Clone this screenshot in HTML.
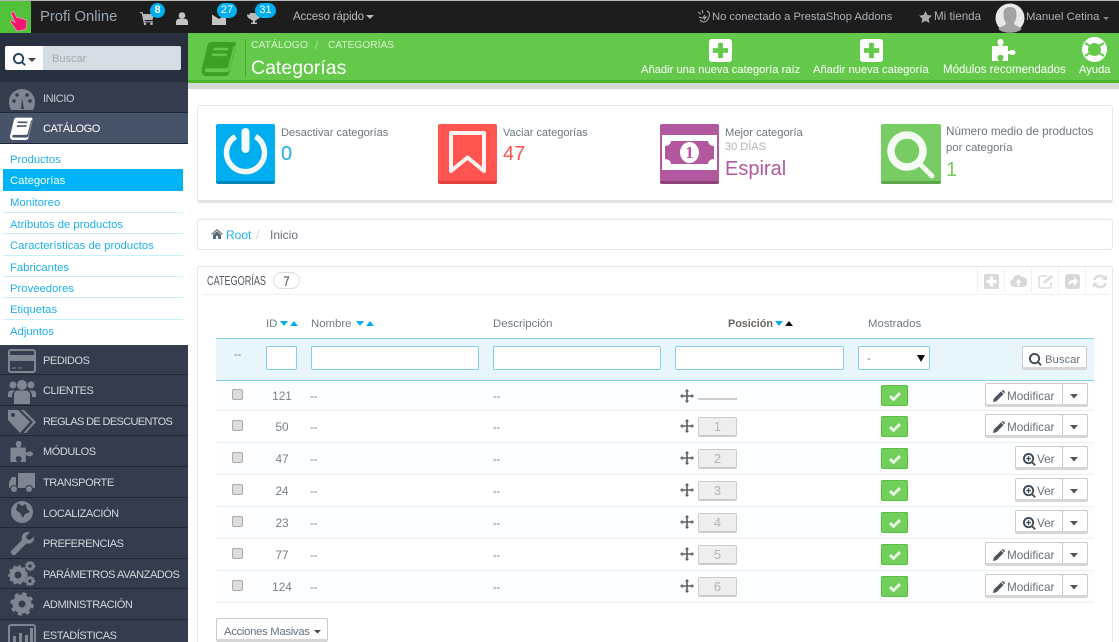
<!DOCTYPE html>
<html lang="es"><head><meta charset="utf-8"><title>Categorías</title>
<style>
html,body{margin:0;padding:0;width:1119px;height:642px;overflow:hidden;background:#fff;font-family:"Liberation Sans",sans-serif;font-size:12.5px;color:#6c7680}
#w{position:relative;width:1119px;height:642px;overflow:hidden}
.b,.t,svg{position:absolute}
.b{box-sizing:border-box}
.t{white-space:nowrap;line-height:16px}
.m{color:#fff;font-size:11px;letter-spacing:-.42px;margin-top:1px}
.sub{color:#1eaeec;font-size:11.3px;left:10px;margin-top:1px}
.sep{left:3px;width:180px;height:1px;background:#c9effc}
.si{background:#333d4e;left:0;width:188px;border-bottom:1px solid #1f2735}
.lab{color:#fff;font-size:11.2px;margin-top:1px}
.inp{background:#fff;border:1px solid #84cdea;border-radius:2px;height:24px;top:346px}
.hdr{color:#6f7a84;font-size:11.4px;top:316px}
.row{left:216px;width:878px;border-bottom:1px solid #e8eff2}
.cb{left:232px;width:11px;height:11px;background:#dcdcdc;border:1px solid #aaa;border-radius:2px}
.id{width:40px;left:262px;text-align:center;color:#78818a;font-size:11.8px}
.dd{color:#6f7a84;font-size:11px}
.pos{left:698px;width:39px;height:20px;background:#eee;border:1px solid #ccc;border-bottom-width:2px;border-radius:2px;color:#b4b4b4;text-align:center;line-height:18px;font-size:13px}
.ck{left:881px;width:27px;height:21px;background:#72cf5b;border:1px solid #57c13e;border-radius:2px}
.btn{background:#fff;border:1px solid #ccc;border-bottom:3px solid #d6d6d6;border-radius:2px;height:24px}
.bt{color:#66727c;font-size:11.7px;margin-top:1px}
.tb{width:1px;height:28px;top:267px;background:#f0f0f0}
.bdg{border-radius:8px;background:#00aff0}
.nar{transform-origin:left center;font-size:13px;color:#505a63}
</style></head><body><div id="w">
<svg width="0" height="0" style="position:absolute"><defs>
<symbol id="plus" viewBox="0 0 24 24"><path d="M3 0h18a3 3 0 0 1 3 3v18a3 3 0 0 1-3 3H3a3 3 0 0 1-3-3V3a3 3 0 0 1 3-3zM9.500 4v5.500H4v5h5.500V20h5v-5.500H20v-5h-5.500V4z" fill-rule="evenodd"/></symbol>
<symbol id="puz" viewBox="0 0 24 24"><path d="M0 8h6.500C7 7 5.500 6 5.500 4 5.500 2 7 1 8.500 1S11.500 2 11.500 4c0 2-1.500 3-1 4H16v5c1 .6 2-1 4-1 2 0 3.500 1 3.500 2.500S22 17 20 17c-2 0-3-1.500-4-1v7h-5.500c-.5-1 1-2 1-3.500S10.500 17 8.500 17s-3 1-3 2.500 1.500 2.500 1 3.500H0z"/></symbol>
<symbol id="mag" viewBox="0 0 14 14"><path d="M6 0a6 6 0 0 1 4.800 9.500l3 3-1.400 1.400-3-3A6 6 0 1 1 6 0zm0 2a4 4 0 1 0 0 8 4 4 0 0 0 0-8z" fill-rule="evenodd"/></symbol>
<symbol id="magp" viewBox="0 0 14 14"><path d="M6 0a6 6 0 0 1 4.800 9.500l3 3-1.400 1.400-3-3A6 6 0 1 1 6 0zm0 2a4 4 0 1 0 0 8 4 4 0 0 0 0-8zM5.300 3.500h1.400v1.800h1.800v1.400H6.700v1.800H5.300V6.700H3.500V5.300h1.800z" fill-rule="evenodd"/></symbol>
<symbol id="pen" viewBox="0 0 12 12"><path d="M0 12l.8-3.400L8 1.400 10.600 4l-7.200 7.200zM8.800.6c.6-.6 1.400-.6 2 0l.6.600c.6.6.6 1.400 0 2l-.2.200-2.600-2.600z"/></symbol>
<symbol id="mv" viewBox="0 0 14 14"><path d="M7 0l2.200 2.500H7.800v3.700h3.700V4.800L14 7l-2.500 2.200V7.800H7.800v3.700h1.400L7 14l-2.200-2.500h1.400V7.800H2.500v1.400L0 7l2.500-2.200v1.400h3.700V2.500H4.800z"/></symbol>
<symbol id="book" viewBox="0 0 36 36"><path d="M10 1h23c2 0 2.500 1 2 3l-6 25c-.5 2-1.500 3-3.500 3H6c-1.500 0-2.500-.6-2.500-2s1-2 2.500-2h19c1.500 0 2.300-.6 2.800-2.500L33 5l2 1-6.500 27c-.5 2-2 3-4 3H5c-3 0-5-2-5-5 0-1 .2-2 .5-3L6 5c.6-2.500 2-4 4-4zm2.500 6l-.5 2.500h15L27.500 7zm-1.500 6l-.5 2.500h15l.5-2.500z" fill-rule="evenodd"/></symbol>
</defs></svg>

<!-- top bar -->
<div class="b" style="left:0;top:0;width:1119px;height:1px;background:#b5b5b5"></div>
<div class="b" style="left:0;top:1px;width:1119px;height:32px;background:#1d1d1d"></div>
<div class="b" style="left:0;top:1px;width:31px;height:32px;background:#52c13a"></div>
<svg style="left:9px;top:9px" width="20" height="23" viewBox="0 0 20 23"><path d="M3 3c1-1 2 0 2.500 1L8 9l1-.5c1-.4 1.500.2 2 .7 1-.5 1.700-.2 2.200.6 1-.4 1.700 0 2.200.8 1-.3 2 .3 2.300 1.400.4 2.500-.3 6-1.200 8.500L8 22 1.500 13c-.5-1 .3-2 1.500-1.500l3 2L2.500 5C2.300 4 2.500 3.500 3 3z" fill="#f2186e" stroke="#f7a9c9" stroke-width=".6"/></svg>
<div class="t" style="left:40px;top:9px;color:#9ba7b2;font-size:14.8px">Profi Online</div>
<svg style="left:140px;top:12px" width="14" height="13" viewBox="0 0 14 13" fill="#b4b8bb"><path d="M0 0h2.500l.5 2h11l-1.500 6H4.500l.3 1.200H13v1.100H3.500L1.700 1.200H0z"/><circle cx="5" cy="11.700" r="1.300"/><circle cx="11.500" cy="11.700" r="1.300"/></svg>
<svg style="left:176px;top:12px" width="12" height="13" viewBox="0 0 12 13" fill="#c4c4c4"><circle cx="6" cy="3.500" r="3.300"/><path d="M0 13V10c0-2 1.500-3.300 3-3.300h6c1.500 0 3 1.300 3 3.300v3z"/></svg>
<svg style="left:212px;top:13px" width="14" height="12" viewBox="0 0 14 12" fill="#c4c4c4"><path d="M0 1.500 7 6l7-4.500V12H0z"/></svg>
<svg style="left:247px;top:13px" width="14" height="12" viewBox="0 0 14 12" fill="#bbb"><path d="M3 0h8v1.500h3C14 4 12.500 5.500 10.500 6 10 7 9 7.500 8 7.700V9.500h2V11H4V9.500h2V7.700C5 7.500 4 7 3.500 6 1.500 5.500 0 4 0 1.500h3z"/></svg>
<div class="b bdg" style="left:150px;top:3px;width:15px;height:15px"></div>
<div class="t" style="left:150px;top:2px;width:15px;text-align:center;color:#fff;font-size:11px;font-weight:bold">8</div>
<div class="b bdg" style="left:217px;top:3px;width:20px;height:15px"></div>
<div class="t" style="left:217px;top:2px;width:20px;text-align:center;color:#fff;font-size:11px">27</div>
<div class="b bdg" style="left:255px;top:3px;width:21px;height:15px"></div>
<div class="t" style="left:255px;top:2px;width:21px;text-align:center;color:#fff;font-size:11px">31</div>
<div class="t" style="left:293px;top:9px;color:#b5bbc1;font-size:11.5px;letter-spacing:-.15px">Acceso rápido</div>
<div class="b" style="left:366px;top:15px;border:4px solid transparent;border-top:4px solid #b5bbc1;border-bottom:0"></div>
<svg style="left:697px;top:9px" width="14" height="15" viewBox="0 0 14 15" fill="none" stroke="#b0b0b0"><path d="M1 3l3 2M5 1l1 3M10 2c2 1 3 3 2 6s-3 5-5 5-3-1-4-2M2 8l3 1M8 6l-2 3 3-1-2 3"/></svg>
<div class="t" style="left:712px;top:9px;color:#a9b2ba;font-size:11.2px">No conectado a PrestaShop Addons</div>
<svg style="left:919px;top:11px" width="13" height="12" viewBox="0 0 13 12" fill="#a9a9a9"><path d="M6.500 0l2 4 4.500.6-3.300 3.100.8 4.300-4-2.100-4 2.100.8-4.300L0 4.600 4.500 4z"/></svg>
<div class="t" style="left:934px;top:9px;color:#a9b2ba;font-size:11.6px">Mi tienda</div>
<svg style="left:995px;top:3px" width="30" height="30" viewBox="0 0 30 30"><circle cx="15" cy="15" r="14.500" fill="#e9e9e9"/><path d="M9 29c-1-.3-4-1-5.500-3 1.500-2.500 5-3 6.500-4 1-.7 1-2 .5-3C9 17 8.500 14 8.500 10.500 8.500 6 11 4 15 4s6.500 2 6.500 6.500c0 3.500-.5 6.500-2 8.500-.5 1-.5 2.300.5 3 1.500 1 5 1.500 6.500 4-1.500 2-4.500 2.700-5.500 3-2 .6-4 .8-6 .8s-4-.2-6-.8z" fill="#a3a3a3"/></svg>
<div class="t" style="left:1026px;top:9px;color:#a9b2ba;font-size:11.4px">Manuel Cetina</div>
<div class="b" style="left:1103px;top:17px;border:3px solid transparent;border-top:3px solid #8a8a8a;border-bottom:0"></div>

<!-- green header -->
<div class="b" style="left:188px;top:33px;width:931px;height:48px;background:#64c94a"></div>
<div class="b" style="left:188px;top:80px;width:931px;height:3px;background:#48b52a"></div>
<div class="b" style="left:188px;top:83px;width:931px;height:6px;background:#d8d8d8"></div>
<svg style="left:201px;top:41px" width="36" height="35" fill="#3ea023"><use href="#book"/></svg>
<div class="b" style="left:245px;top:39px;width:1px;height:38px;background:#45a52c"></div>
<div class="t" style="left:251px;top:38px;color:#d7f1cf;font-size:10.4px">CATÁLOGO</div>
<div class="t" style="left:315px;top:38px;color:#a8e097;font-size:11px">/</div>
<div class="t" style="left:328px;top:38px;color:#d7f1cf;font-size:10.2px">CATEGORÍAS</div>
<div class="t" style="left:251px;top:59px;color:#fff;font-size:19.5px;line-height:18px">Categorías</div>
<svg style="left:709px;top:39px" width="23" height="23" fill="#fff"><use href="#plus"/></svg>
<svg style="left:860px;top:39px" width="23" height="23" fill="#fff"><use href="#plus"/></svg>
<svg style="left:992px;top:38px" width="24" height="24" fill="#fff"><use href="#puz"/></svg>
<svg style="left:1082px;top:37px" width="25" height="25" viewBox="0 0 25 25"><circle cx="12.500" cy="12.500" r="9.500" fill="none" stroke="#fff" stroke-width="6"/><path d="M3 6l5 3M22 6l-5 3M3 19l5-3M22 19l-5-3" stroke="#64c94a" stroke-width="2"/></svg>
<div class="t lab" style="left:641px;top:61px">Añadir una nueva categoría raíz</div>
<div class="t lab" style="left:813px;top:61px">Añadir nueva categoría</div>
<div class="t lab" style="left:943px;top:61px;font-size:11.5px">Módulos recomendados</div>
<div class="t lab" style="left:1079px;top:61px">Ayuda</div>

<!-- sidebar -->
<div class="b" style="left:0;top:33px;width:188px;height:49px;background:#28303f"></div>
<div class="b" style="left:5px;top:46px;width:176px;height:24px;background:#d6dce4;border-radius:2px"></div>
<div class="b" style="left:5px;top:46px;width:38px;height:24px;background:#fff;border-radius:2px 0 0 2px"></div>
<svg style="left:13px;top:53px" width="13" height="13" fill="#27405a"><use href="#mag"/></svg>
<div class="b" style="left:28px;top:58px;border:4px solid transparent;border-top:4px solid #444;border-bottom:0"></div>
<div class="t" style="left:52px;top:51px;color:#a4a9ae;font-size:11px">Buscar</div>

<div class="b si" style="top:82px;height:31px;background:#333d4e"></div>
<svg style="left:9px;top:89px" width="26" height="21" viewBox="0 0 26 21"><path d="M13 0a13 13 0 0 1 13 13c0 3-.7 5.500-2 8H2c-1.300-2.500-2-5-2-8A13 13 0 0 1 13 0z" fill="#7f8691"/><path d="M12 20l1-11 2 11z" fill="#333d4e"/><circle cx="5" cy="12" r="1.800" fill="#333d4e"/><circle cx="8" cy="6" r="1.800" fill="#333d4e"/><circle cx="18" cy="6" r="1.800" fill="#333d4e"/><circle cx="21" cy="12" r="1.800" fill="#333d4e"/></svg>
<div class="t m" style="left:43px;top:90px;color:#c6ccd3">INICIO</div>
<div class="b" style="left:0;top:113px;width:188px;height:31px;background:#465368;border-bottom:1px solid #1f2735"></div>
<svg style="left:9px;top:117px" width="25" height="23" viewBox="0 0 36 36" fill="#fff"><use href="#book"/></svg>
<div class="t m" style="left:43px;top:120px;color:#fff">CATÁLOGO</div>

<div class="b" style="left:0;top:144px;width:188px;height:201px;background:#fff"></div>
<div class="b" style="left:3px;top:169px;width:180px;height:22px;background:#00b4f9"></div>
<div class="b sep" style="top:212px"></div><div class="b sep" style="top:233px"></div><div class="b sep" style="top:255px"></div><div class="b sep" style="top:276px"></div><div class="b sep" style="top:297px"></div><div class="b sep" style="top:319px"></div>
<div class="t sub" style="top:151px">Productos</div>
<div class="t sub" style="top:172px;color:#fff">Categorías</div>
<div class="t sub" style="top:194px">Monitoreo</div>
<div class="t sub" style="top:216px">Atributos de productos</div>
<div class="t sub" style="top:237px">Características de productos</div>
<div class="t sub" style="top:259px">Fabricantes</div>
<div class="t sub" style="top:280px">Proveedores</div>
<div class="t sub" style="top:301px">Etiquetas</div>
<div class="t sub" style="top:323px">Adjuntos</div>

<div class="b si" style="top:345px;height:30px"></div>
<div class="b si" style="top:375px;height:31px"></div>
<div class="b si" style="top:406px;height:30px"></div>
<div class="b si" style="top:436px;height:31px"></div>
<div class="b si" style="top:467px;height:31px"></div>
<div class="b si" style="top:498px;height:30px"></div>
<div class="b si" style="top:528px;height:31px"></div>
<div class="b si" style="top:559px;height:30px"></div>
<div class="b si" style="top:589px;height:31px"></div>
<div class="b si" style="top:620px;height:22px;border:0"></div>

<svg style="left:8px;top:349px" width="28" height="24" viewBox="0 0 28 24"><rect x="1" y="1" width="26" height="22" rx="2" fill="none" stroke="#7f8691" stroke-width="2"/><rect x="1" y="6" width="26" height="6" fill="#7f8691"/><path d="M4 19h4M10 19h4" stroke="#7f8691"/></svg>
<svg style="left:8px;top:379px" width="28" height="25" viewBox="0 0 28 25" fill="#7f8691"><circle cx="14" cy="6" r="5"/><circle cx="5" cy="6" r="3.500"/><circle cx="23" cy="6" r="3.500"/><path d="M6 25V16c0-3 2-4.500 4-4.500h8c2 0 4 1.500 4 4.500v9zM0 18v-3c0-2 1-3.500 3-3.500h4c-1.500 1-3 2.500-3 5v1.500zM28 18v-3c0-2-1-3.500-3-3.500h-4c1.500 1 3 2.500 3 5v1.500z"/></svg>
<svg style="left:8px;top:409px" width="28" height="24" viewBox="0 0 28 24" fill="#7f8691"><path d="M0 1h10l12 12-10 11L0 11zM5 4a2 2 0 1 0 0 4 2 2 0 0 0 0-4z" fill-rule="evenodd"/><path d="M13 1h3l12 12-10 11h-2.500l9.500-11z"/></svg>
<svg style="left:10px;top:440px" width="24" height="23" fill="#7f8691"><use href="#puz"/></svg>
<svg style="left:9px;top:473px" width="26" height="20" viewBox="0 0 26 20" fill="#7f8691"><path d="M9 0h17v15H9zM7 4v11H0V9l3-5z"/><circle cx="5" cy="16" r="3.500" stroke="#333d4e"/><circle cx="20" cy="16" r="3.500" stroke="#333d4e"/></svg>
<svg style="left:10px;top:500px" width="24" height="24" viewBox="0 0 24 24"><circle cx="12" cy="12" r="11" fill="#7f8691"/><path d="M8 3l4 3 4-2 1 5 3 3-5 2-2 4-3-5-4-3z" fill="#333d4e"/></svg>
<svg style="left:10px;top:531px" width="24" height="24" viewBox="0 0 24 24" fill="#7f8691"><path d="M1 20L12 9c-1-4 1-8 6-8l2 .5-4 3.500 1 3 3 1 4-3.500c.5 5-3 8-7.500 7L5 24c-2 1-5-2-4-4z"/></svg>
<svg style="left:8px;top:561px" width="28" height="25" viewBox="0 0 28 25"><circle cx="10" cy="14" r="6" fill="none" stroke="#7f8691" stroke-width="5"/><circle cx="10" cy="14" r="8.500" fill="none" stroke="#7f8691" stroke-width="2.500" stroke-dasharray="2.500 2.500"/><circle cx="22" cy="5" r="3" fill="none" stroke="#7f8691" stroke-width="2.500"/><circle cx="22" cy="5" r="4.500" fill="none" stroke="#7f8691" stroke-width="1.500" stroke-dasharray="1.500 1.500"/><circle cx="22" cy="20" r="3" fill="none" stroke="#7f8691" stroke-width="2.500"/><circle cx="22" cy="20" r="4.500" fill="none" stroke="#7f8691" stroke-width="1.500" stroke-dasharray="1.500 1.500"/></svg>
<svg style="left:10px;top:592px" width="24" height="24" viewBox="0 0 24 24"><circle cx="12" cy="12" r="6.500" fill="none" stroke="#7f8691" stroke-width="6"/><circle cx="12" cy="12" r="10" fill="none" stroke="#7f8691" stroke-width="3.500" stroke-dasharray="4 3.850"/></svg>
<svg style="left:8px;top:624px" width="28" height="18" viewBox="0 0 28 18"><rect x="1" y="1" width="26" height="22" rx="2" fill="none" stroke="#7f8691" stroke-width="2"/><path d="M5 18v-6h3v6zM11 18V9h3v9zM17 18v-7h3v7zM22 18V4h3v14z" fill="#7f8691"/></svg>

<div class="t m" style="left:43px;top:352px;color:#d3d7dc">PEDIDOS</div>
<div class="t m" style="left:43px;top:382px;color:#d3d7dc">CLIENTES</div>
<div class="t m" style="left:43px;top:413px;color:#d3d7dc;letter-spacing:-.65px">REGLAS DE DESCUENTOS</div>
<div class="t m" style="left:43px;top:443px;color:#d3d7dc">MÓDULOS</div>
<div class="t m" style="left:43px;top:474px;color:#d3d7dc">TRANSPORTE</div>
<div class="t m" style="left:43px;top:505px;color:#d3d7dc">LOCALIZACIÓN</div>
<div class="t m" style="left:43px;top:535px;color:#d3d7dc">PREFERENCIAS</div>
<div class="t m" style="left:43px;top:566px;color:#d3d7dc">PARÁMETROS AVANZADOS</div>
<div class="t m" style="left:43px;top:596px;color:#d3d7dc">ADMINISTRACIÓN</div>
<div class="t m" style="left:43px;top:627px;color:#d3d7dc">ESTADÍSTICAS</div>

<!-- stats -->
<div class="b" style="left:197px;top:105px;width:916px;height:98px;border:1px solid #e6e6e6;border-bottom:3px solid #e3e3e3;border-radius:3px"></div>
<div class="b" style="left:216px;top:124px;width:59px;height:60px;background:#00aeef;border-bottom:3px solid #0088bd;border-radius:2px"></div>
<svg style="left:216px;top:124px" width="59" height="57" viewBox="0 0 59 57" fill="none" stroke="#f1f9fd" stroke-width="5.500"><path d="M19.500 12.500A19 19 0 1 0 39.500 12.500"/><path d="M29.500 8v17" stroke-width="8" stroke-linecap="round"/></svg>
<div class="t" style="left:281px;top:125px;font-size:11.1px">Desactivar categorías</div>
<div class="t" style="left:281px;top:145px;font-size:20px;line-height:18px;color:#1eaeec">0</div>
<div class="b" style="left:438px;top:124px;width:59px;height:60px;background:#ff5450;border-bottom:3px solid #e43f3c;border-radius:2px"></div>
<svg style="left:438px;top:124px" width="59" height="57" viewBox="0 0 59 57" fill="none" stroke="#fff3f2" stroke-width="4" stroke-linejoin="round"><path d="M13 9h33v38L29.500 33.500 13 47z"/></svg>
<div class="t" style="left:503px;top:125px;font-size:11px">Vaciar categorías</div>
<div class="t" style="left:503px;top:145px;font-size:20px;line-height:18px;color:#ff5450">47</div>
<div class="b" style="left:660px;top:124px;width:59px;height:60px;background:#b1589f;border-bottom:3px solid #8a4279;border-radius:2px"></div>
<svg style="left:660px;top:124px" width="59" height="57" viewBox="0 0 59 57"><path d="M2 11h55v35H2z" fill="#fff"/><path d="M11 17h37c0 3 3 5 6 5v13c-3 0-6 2-6 5H11c0-3-3-5-6-5V22c3 0 6-2 6-5z" fill="#b1589f"/><ellipse cx="29.500" cy="28.500" rx="9.500" ry="10.500" fill="#fff"/><text x="29.500" y="34" text-anchor="middle" font-family="Liberation Serif,serif" font-weight="bold" font-size="17" fill="#b1589f">1</text></svg>
<div class="t" style="left:725px;top:125px;font-size:11.2px">Mejor categoría</div>
<div class="t" style="left:725px;top:139px;font-size:11px;color:#aeb4ba">30 DÍAS</div>
<div class="t" style="left:725px;top:160px;font-size:20px;line-height:18px;color:#b1589f">Espiral</div>
<div class="b" style="left:881px;top:124px;width:60px;height:60px;background:#77cc63;border-bottom:3px solid #5aa84a;border-radius:2px"></div>
<svg style="left:881px;top:124px" width="60" height="57" viewBox="0 0 60 57" fill="none" stroke="#f4fbf2"><circle cx="26" cy="27" r="16" stroke-width="7.500"/><path d="M40 41l11 11" stroke-width="5" stroke-linecap="round"/></svg>
<div class="t" style="left:946px;top:124px;font-size:11.7px">Número medio de productos</div>
<div class="t" style="left:946px;top:140px;font-size:11.3px">por categoría</div>
<div class="t" style="left:946px;top:161px;font-size:20px;line-height:18px;color:#77cc63">1</div>

<!-- breadcrumb -->
<div class="b" style="left:197px;top:219px;width:916px;height:31px;border:1px solid #e6e6e6;border-radius:3px"></div>
<svg style="left:211px;top:229px" width="12" height="10" viewBox="0 0 12 10" fill="#5d6b75"><path d="M6 0l6 5-.7.8L6 1.500.7 5.800 0 5zM2 5.500l4-3.300 4 3.300V10H7V7H5v3H2z"/></svg>
<div class="t" style="left:226px;top:227px;font-size:12px;color:#1eaeec">Root</div>
<div class="t" style="left:256px;top:227px;font-size:12px;color:#ccc">/</div>
<div class="t" style="left:270px;top:227px;font-size:12px;color:#6d6a7a">Inicio</div>

<!-- panel -->
<div class="b" style="left:197px;top:266px;width:916px;height:390px;border:1px solid #e6e6e6;border-radius:3px"></div>
<div class="b" style="left:202px;top:294px;width:906px;height:1px;background:#eeeeee"></div>
<div class="t nar" style="left:207px;top:273px;transform:scaleX(.7)">CATEGORÍAS</div>
<div class="b" style="left:273px;top:272px;width:27px;height:17px;border:1px solid #ddd;border-radius:9px"></div>
<div class="t" style="left:273px;top:273px;width:27px;text-align:center;font-size:14px;color:#444;transform:scaleX(.8)">7</div>
<div class="b tb" style="left:977px"></div><div class="b tb" style="left:1004px"></div><div class="b tb" style="left:1031px"></div><div class="b tb" style="left:1058px"></div><div class="b tb" style="left:1085px"></div>
<svg style="left:984px;top:274px" width="15" height="15" fill="#d9d9d9"><use href="#plus"/></svg>
<svg style="left:1010px;top:274px" width="17" height="14" viewBox="0 0 17 14"><path d="M4 13a4 4 0 0 1-1-7.800A5 5 0 0 1 12 3a4.500 4.500 0 0 1 1 10z" fill="#d9d9d9"/><path d="M8.500 5l3 3.500h-2V12h-2V8.500h-2z" fill="#fff"/></svg>
<svg style="left:1038px;top:274px" width="16" height="15" viewBox="0 0 16 15" fill="none" stroke="#dcdcdc" stroke-width="1.500"><path d="M13 8v4.500a1.500 1.500 0 0 1-1.500 1.500h-9A1.500 1.500 0 0 1 1 12.500v-9A1.500 1.500 0 0 1 2.500 2H9"/><path d="M5 10l1-3 7-6 2 2-7 6z" fill="#dcdcdc" stroke="none"/></svg>
<svg style="left:1065px;top:274px" width="15" height="15" viewBox="0 0 15 15"><rect width="15" height="15" rx="3" fill="#d9d9d9"/><path d="M3 12c0-4 2-6 6-6V3l4 4.500L9 12V9c-3 0-5 1-6 3z" fill="#fff"/></svg>
<svg style="left:1092px;top:274px" width="16" height="15" viewBox="0 0 16 15" fill="#dcdcdc"><path d="M1 6a7 7 0 0 1 12-3l2-2v5h-5l1.500-1.500A5 5 0 0 0 3.500 6zM15 9a7 7 0 0 1-12 3l-2 2V9h5l-1.500 1.500A5 5 0 0 0 12.500 9z"/></svg>

<!-- table -->
<div class="t hdr" style="left:266px">ID</div>
<div class="t hdr" style="left:311px">Nombre</div>
<div class="t hdr" style="left:493px">Descripción</div>
<div class="t hdr" style="left:728px;font-weight:bold;font-size:10.8px;color:#6b6660">Posición</div>
<div class="t hdr" style="left:868px">Mostrados</div>
<svg style="left:280px;top:321px" width="19" height="6" fill="#00aff0"><path d="M0 0h8L4 5zM10 5h8L14 0z"/></svg>
<svg style="left:356px;top:321px" width="19" height="6" fill="#00aff0"><path d="M0 0h8L4 5zM10 5h8L14 0z"/></svg>
<svg style="left:775px;top:321px" width="19" height="6"><path d="M0 0h8L4 5z" fill="#00aff0"/><path d="M10 5h8L14 0z" fill="#111"/></svg>

<div class="b" style="left:216px;top:338px;width:878px;height:43px;background:#e8f5fb;border-top:1px solid #7fd0f0;border-bottom:1px solid #7fd0f0"></div>
<div class="t dd" style="left:234px;top:347px">--</div>
<div class="b inp" style="left:266px;width:31px"></div>
<div class="b inp" style="left:311px;width:168px"></div>
<div class="b inp" style="left:493px;width:168px"></div>
<div class="b inp" style="left:675px;width:169px"></div>
<div class="b inp" style="left:858px;width:72px"></div>
<div class="t dd" style="left:867px;top:351px">-</div>
<svg style="left:917px;top:355px" width="8" height="7" fill="#111"><path d="M0 0h8L4 7z"/></svg>
<div class="b btn" style="left:1022px;top:346px;width:65px"></div>
<svg style="left:1029px;top:353px" width="13" height="13" fill="#3d4a54"><use href="#mag"/></svg>
<div class="t bt" style="left:1045px;top:351px;font-size:11.3px">Buscar</div>

<div class="b row" style="top:381px;height:30px;background:#fbfdfe"></div>
<div class="b row" style="top:411px;height:32px"></div>
<div class="b row" style="top:443px;height:32px;background:#fbfdfe"></div>
<div class="b row" style="top:475px;height:32px"></div>
<div class="b row" style="top:507px;height:32px;background:#fbfdfe"></div>
<div class="b row" style="top:539px;height:32px"></div>
<div class="b row" style="top:571px;height:32px;background:#fbfdfe"></div>

<div class="b cb" style="top:389px"></div><div class="b cb" style="top:420px"></div><div class="b cb" style="top:452px"></div><div class="b cb" style="top:484px"></div><div class="b cb" style="top:516px"></div><div class="b cb" style="top:548px"></div><div class="b cb" style="top:580px"></div>
<div class="t id" style="top:388px">121</div><div class="t id" style="top:419px">50</div><div class="t id" style="top:451px">47</div><div class="t id" style="top:483px">24</div><div class="t id" style="top:515px">23</div><div class="t id" style="top:547px">77</div><div class="t id" style="top:579px">124</div>

<div class="t dd" style="left:310px;top:389px">--</div><div class="t dd" style="left:493px;top:389px">--</div>
<div class="t dd" style="left:310px;top:420px">--</div><div class="t dd" style="left:493px;top:420px">--</div>
<div class="t dd" style="left:310px;top:452px">--</div><div class="t dd" style="left:493px;top:452px">--</div>
<div class="t dd" style="left:310px;top:484px">--</div><div class="t dd" style="left:493px;top:484px">--</div>
<div class="t dd" style="left:310px;top:516px">--</div><div class="t dd" style="left:493px;top:516px">--</div>
<div class="t dd" style="left:310px;top:548px">--</div><div class="t dd" style="left:493px;top:548px">--</div>
<div class="t dd" style="left:310px;top:580px">--</div><div class="t dd" style="left:493px;top:580px">--</div>

<svg style="left:680px;top:389px" width="14" height="14" fill="#5a5f66"><use href="#mv"/></svg>
<svg style="left:680px;top:419px" width="14" height="14" fill="#5a5f66"><use href="#mv"/></svg>
<svg style="left:680px;top:451px" width="14" height="14" fill="#5a5f66"><use href="#mv"/></svg>
<svg style="left:680px;top:483px" width="14" height="14" fill="#5a5f66"><use href="#mv"/></svg>
<svg style="left:680px;top:515px" width="14" height="14" fill="#5a5f66"><use href="#mv"/></svg>
<svg style="left:680px;top:547px" width="14" height="14" fill="#5a5f66"><use href="#mv"/></svg>
<svg style="left:680px;top:579px" width="14" height="14" fill="#5a5f66"><use href="#mv"/></svg>
<div class="b" style="left:698px;top:398px;width:39px;height:2px;background:#ccc"></div>
<div class="b pos" style="top:417px">1</div><div class="b pos" style="top:449px">2</div><div class="b pos" style="top:481px">3</div><div class="b pos" style="top:513px">4</div><div class="b pos" style="top:545px">5</div><div class="b pos" style="top:577px">6</div>

<div class="b ck" style="top:385px"></div><div class="b ck" style="top:416px"></div><div class="b ck" style="top:448px"></div><div class="b ck" style="top:480px"></div><div class="b ck" style="top:512px"></div><div class="b ck" style="top:544px"></div><div class="b ck" style="top:576px"></div>
<svg style="left:889px;top:391px" width="12" height="10" fill="none" stroke="#eaf8e6" stroke-width="2.800"><path d="M1 5l3.500 3.500L11 2"/></svg>
<svg style="left:889px;top:422px" width="12" height="10" fill="none" stroke="#eaf8e6" stroke-width="2.800"><path d="M1 5l3.500 3.500L11 2"/></svg>
<svg style="left:889px;top:454px" width="12" height="10" fill="none" stroke="#eaf8e6" stroke-width="2.800"><path d="M1 5l3.500 3.500L11 2"/></svg>
<svg style="left:889px;top:486px" width="12" height="10" fill="none" stroke="#eaf8e6" stroke-width="2.800"><path d="M1 5l3.500 3.500L11 2"/></svg>
<svg style="left:889px;top:518px" width="12" height="10" fill="none" stroke="#eaf8e6" stroke-width="2.800"><path d="M1 5l3.500 3.500L11 2"/></svg>
<svg style="left:889px;top:550px" width="12" height="10" fill="none" stroke="#eaf8e6" stroke-width="2.800"><path d="M1 5l3.500 3.500L11 2"/></svg>
<svg style="left:889px;top:582px" width="12" height="10" fill="none" stroke="#eaf8e6" stroke-width="2.800"><path d="M1 5l3.500 3.500L11 2"/></svg>

<!-- action buttons -->
<div class="b btn" style="left:985px;top:383px;width:78px"></div><div class="b btn" style="left:1062px;top:383px;width:26px"></div>
<svg style="left:993px;top:390px" width="12" height="12" fill="#4a5560"><use href="#pen"/></svg><div class="t bt" style="left:1007px;top:388px">Modificar</div>
<div class="b btn" style="left:985px;top:414px;width:78px"></div><div class="b btn" style="left:1062px;top:414px;width:26px"></div>
<svg style="left:993px;top:421px" width="12" height="12" fill="#4a5560"><use href="#pen"/></svg><div class="t bt" style="left:1007px;top:419px">Modificar</div>
<div class="b btn" style="left:1015px;top:446px;width:48px"></div><div class="b btn" style="left:1062px;top:446px;width:26px"></div>
<svg style="left:1023px;top:453px" width="13" height="13" fill="#3d4a54"><use href="#magp"/></svg><div class="t bt" style="left:1037px;top:451px">Ver</div>
<div class="b btn" style="left:1015px;top:478px;width:48px"></div><div class="b btn" style="left:1062px;top:478px;width:26px"></div>
<svg style="left:1023px;top:485px" width="13" height="13" fill="#3d4a54"><use href="#magp"/></svg><div class="t bt" style="left:1037px;top:483px">Ver</div>
<div class="b btn" style="left:1015px;top:510px;width:48px"></div><div class="b btn" style="left:1062px;top:510px;width:26px"></div>
<svg style="left:1023px;top:517px" width="13" height="13" fill="#3d4a54"><use href="#magp"/></svg><div class="t bt" style="left:1037px;top:515px">Ver</div>
<div class="b btn" style="left:985px;top:542px;width:78px"></div><div class="b btn" style="left:1062px;top:542px;width:26px"></div>
<svg style="left:993px;top:549px" width="12" height="12" fill="#4a5560"><use href="#pen"/></svg><div class="t bt" style="left:1007px;top:547px">Modificar</div>
<div class="b btn" style="left:985px;top:574px;width:78px"></div><div class="b btn" style="left:1062px;top:574px;width:26px"></div>
<svg style="left:993px;top:581px" width="12" height="12" fill="#4a5560"><use href="#pen"/></svg><div class="t bt" style="left:1007px;top:579px">Modificar</div>
<svg style="left:1069px;top:394px" width="10" height="5" fill="#555"><path d="M1 0h8L5 4.500z"/></svg>
<svg style="left:1069px;top:425px" width="10" height="5" fill="#555"><path d="M1 0h8L5 4.500z"/></svg>
<svg style="left:1069px;top:457px" width="10" height="5" fill="#555"><path d="M1 0h8L5 4.500z"/></svg>
<svg style="left:1069px;top:489px" width="10" height="5" fill="#555"><path d="M1 0h8L5 4.500z"/></svg>
<svg style="left:1069px;top:521px" width="10" height="5" fill="#555"><path d="M1 0h8L5 4.500z"/></svg>
<svg style="left:1069px;top:553px" width="10" height="5" fill="#555"><path d="M1 0h8L5 4.500z"/></svg>
<svg style="left:1069px;top:585px" width="10" height="5" fill="#555"><path d="M1 0h8L5 4.500z"/></svg>

<div class="b btn" style="left:216px;top:618px;width:112px;height:24px"></div>
<div class="t bt" style="left:224px;top:623px;font-size:11.3px;letter-spacing:-.3px">Acciones Masivas</div>
<svg style="left:314px;top:630px" width="7" height="4" fill="#444"><path d="M0 0h7L3.500 3.500z"/></svg>
</div></body></html>
